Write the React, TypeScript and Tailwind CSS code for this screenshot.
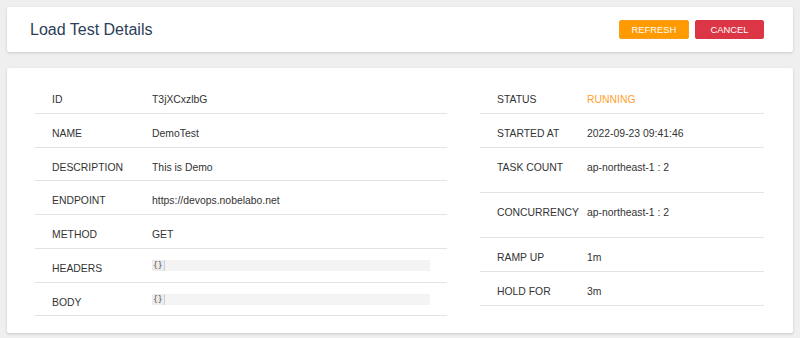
// Load test details page: header card with actions + two-column detail tables.

const LEFT_ROWS: { label: string; value: string; code?: boolean; h: string }[] = [
  { label: "ID", value: "T3jXCxzlbG", h: "h-[34px]" },
  { label: "NAME", value: "DemoTest", h: "h-[34px]" },
  { label: "DESCRIPTION", value: "This is Demo", h: "h-[33px]" },
  { label: "ENDPOINT", value: "https://devops.nobelabo.net", h: "h-[34px]" },
  { label: "METHOD", value: "GET", h: "h-[34px]" },
  { label: "HEADERS", value: "{}", code: true, h: "h-[34px]" },
  { label: "BODY", value: "{}", code: true, h: "h-[33px]" },
];

const RIGHT_ROWS: { label: string; value: string; status?: boolean; h: string }[] = [
  { label: "STATUS", value: "RUNNING", status: true, h: "h-[34px]" },
  { label: "STARTED AT", value: "2022-09-23 09:41:46", h: "h-[34px]" },
  { label: "TASK COUNT", value: "ap-northeast-1 : 2", h: "h-[45px]" },
  { label: "CONCURRENCY", value: "ap-northeast-1 : 2", h: "h-[45px]" },
  { label: "RAMP UP", value: "1m", h: "h-[34px]" },
  { label: "HOLD FOR", value: "3m", h: "h-[34px]" },
];

function CodeBox({ text }: { text: string }) {
  return (
    <div className="mt-[-8px] flex h-[11px] w-[278px] items-center bg-[#f4f4f4]">
      <span className="flex h-full items-center border-r border-[#cfcfcf] bg-[#ececec] pl-[1px] pr-[1px] font-['DejaVu_Sans_Mono',monospace] text-[8px] leading-none text-[#555]">
        {text}
      </span>
    </div>
  );
}

export default function App() {
  return (
    <div className="min-h-[338px] bg-[#efefef] px-[7px] pt-[7px] pb-[5px] font-['Liberation_Sans',Arial,sans-serif] text-[10.4px] text-[#333]">
      {/* Header */}
      <div className="flex h-[45px] items-center justify-between rounded-[2px] bg-white pl-[23px] pr-[29px] shadow-[0_1px_3px_rgba(0,0,0,0.16)]">
        <h1 className="text-[16px] leading-none text-[#2c3e56]">Load Test Details</h1>
        <div className="flex gap-[6px]">
          <button className="h-[19px] w-[70px] rounded-[2px] border border-[#f7a020] bg-[#ff9a00] text-[9.4px] leading-none text-white">
            REFRESH
          </button>
          <button className="h-[19px] w-[69px] rounded-[2px] border border-[#d93545] bg-[#dc3545] text-[9.4px] leading-none text-white">
            CANCEL
          </button>
        </div>
      </div>

      {/* Details */}
      <div className="mt-[16px] flex h-[265px] rounded-[2px] bg-white pl-[28px] pt-[12px] shadow-[0_1px_3px_rgba(0,0,0,0.16)]">
        <div className="w-[412px]">
          {LEFT_ROWS.map((r) => (
            <div key={r.label} className={`flex border-b border-[#e3e3e3] pt-[14px] ${r.h}`}>
              <div className="w-[117px] pl-[17px] leading-[12px]">{r.label}</div>
              <div className="leading-[12px]">
                {r.code ? <div className="pt-[5px]"><CodeBox text={r.value} /></div> : r.value}
              </div>
            </div>
          ))}
        </div>
        <div className="ml-[33px] w-[284px]">
          {RIGHT_ROWS.map((r) => (
            <div key={r.label} className={`flex border-b border-[#e3e3e3] pt-[14px] ${r.h}`}>
              <div className="w-[107px] pl-[17px] leading-[12px]">{r.label}</div>
              <div className={`leading-[12px] ${r.status ? "text-[#ff9f2e]" : ""}`}>{r.value}</div>
            </div>
          ))}
        </div>
      </div>
    </div>
  );
}
